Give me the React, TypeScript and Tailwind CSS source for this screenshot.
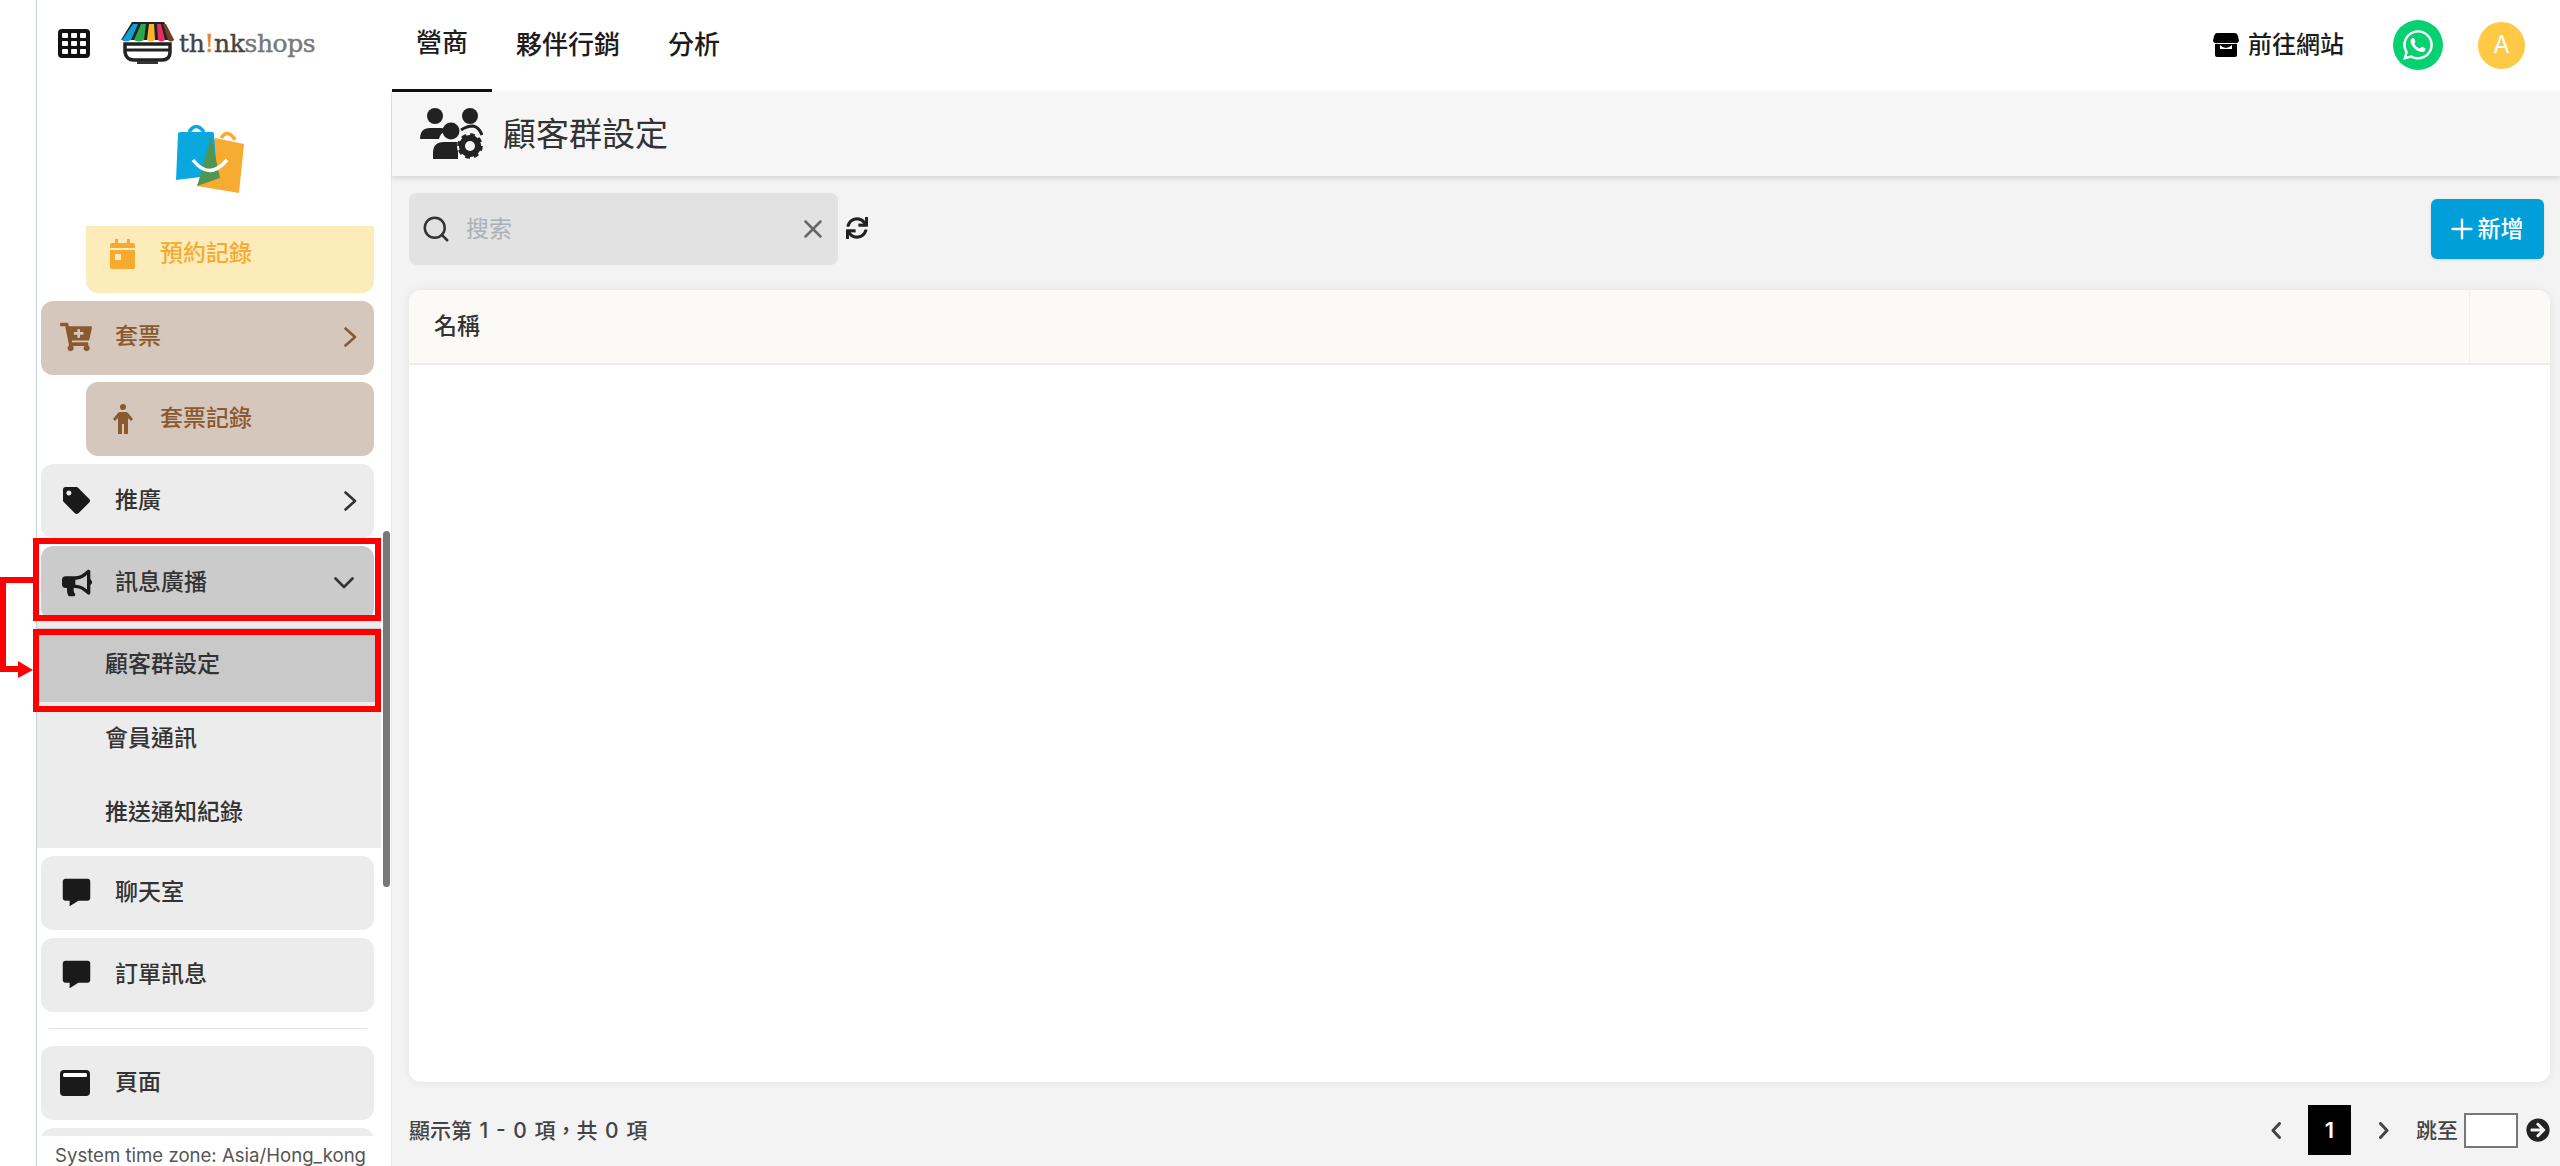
import React from "react";
import { Search, X, Plus } from "lucide-react";
import { FaCartPlus, FaTag, FaBullhorn, FaSync, FaWhatsapp, FaArrowCircleRight } from "react-icons/fa";
import { BiSolidMessage } from "react-icons/bi";

const font = "font-['Inter','Noto_Sans_CJK_TC',sans-serif]";

function GridIcon() {
  return (
    <svg width="32" height="29" viewBox="0 0 32 29">
      <rect x="0" y="0" width="32" height="29" rx="4" fill="#111" />
      {[4, 13, 22].map((x) =>
        [4, 12, 20].map((y) => <rect key={`${x}-${y}`} x={x} y={y} width="6" height="5" rx="1" fill="#fff" />)
      )}
    </svg>
  );
}

function Logo() {
  return (
    <div className="flex items-center gap-[3px]">
      <svg width="56" height="46" viewBox="0 0 56 46">
        <path d="M5 24 L5 32 Q6 40 14 40 L42 40 Q50 40 50 32 L50 24 Z" fill="#fff" stroke="#222" strokeWidth="3.5" />
        <path d="M6 30 L49 30" stroke="#222" strokeWidth="3" />
        <path d="M17 41 h21 v3 h-21 z" fill="#333" />
        <path d="M12 2 L44 2 L54 20 L1 20 Z" fill="#222" />
        <path d="M13 4 L18 4 L11 20 Q5 23 2 20 Z" fill="#109fd8" />
        <path d="M21 4 L26 4 L24 20 Q19 23 14 20 Z" fill="#2aa84a" />
        <path d="M29 4 L34 4 L35 20 Q31 23 27 20 Z" fill="#f9b52c" />
        <path d="M37 4 L41 4 L45 20 Q41 23 38 20 Z" fill="#e52d6b" />
        <path d="M43 4 L46 4 L54 20 Q51 23 48 20 Z" fill="#6f4320" />
      </svg>
      <span className="font-['DejaVu_Serif',serif] text-[25px] leading-none tracking-[-0.4px] text-[#444] [-webkit-text-stroke:0.4px_currentColor]">
        th<span className="text-[#e8862a]">!</span>nk<span className="text-[#777]">shops</span>
      </span>
    </div>
  );
}

function Bags() {
  return (
    <svg width="72" height="72" viewBox="0 0 72 72">
      <path d="M47 15 q7 -10 14 2" stroke="#f8ab31" strokeWidth="3.5" fill="none" />
      <path d="M41 15 L70 21 L65 70 L23 63 Z" fill="#f8ab31" strokeLinejoin="round" />
      <path d="M15 9 q7 -11 15 0" stroke="#0ba8e0" strokeWidth="3.5" fill="none" />
      <path d="M4 11 Q4 9 7 9 L38 9 Q40 9 40 12 L43 52 L2 57 Z" fill="#0ba8e0" />
      <path d="M37 14 L46 55 L23 63 L25 57 Z" fill="#4f9650" />
      <path d="M19 37 Q35 58 53 37" stroke="#fff" strokeWidth="3.5" fill="none" />
    </svg>
  );
}

function CalIcon() {
  return (
    <svg width="25" height="30" viewBox="0 0 25 30">
      <path d="M5 0 h3 v4 h9 v-4 h3 v4 h3 q2 0 2 2 v3 h-25 v-3 q0 -2 2 -2 h3 z" fill="#f8a92f" />
      <path d="M0 11 h25 v17 q0 2 -2 2 h-21 q-2 0 -2 -2 z" fill="#f8a92f" />
      <rect x="5" y="15" width="6" height="6" fill="#fbecb9" />
    </svg>
  );
}

function PersonIcon() {
  return (
    <svg width="20" height="30" viewBox="0 0 20 30" className="ml-[3px]">
      <circle cx="10" cy="3" r="3" fill="currentColor" />
      <path d="M7 8 L13 8 Q14 8 15 9 L20 15 L18 17 L15 14 L15 30 L11 30 L11 20 L9 20 L9 30 L5 30 L5 14 L2 17 L0 15 L5 9 Q6 8 7 8 Z" fill="currentColor" />
    </svg>
  );
}

function WindowIcon() {
  return (
    <svg width="30" height="26" viewBox="0 0 30 26">
      <rect width="30" height="26" rx="4" fill="#1a1a1a" />
      <rect x="3" y="3" width="24" height="4" rx="1.5" fill="#fff" />
    </svg>
  );
}

function StoreIcon() {
  return (
    <svg width="26" height="24" viewBox="0 0 26 24">
      <path d="M4 0 h18 q2 0 3 3 l1 5 q-1 3 -5 2 h-16 q-4 1 -5 -2 l1 -5 q1 -3 3 -3z" fill="#000" />
      <path d="M2 11 h22 v11 q0 2 -2 2 h-18 q-2 0 -2 -2z" fill="#000" />
      <path d="M7 12 q6 6 12 0 v4 h-12z" fill="#fff" />
    </svg>
  );
}

function UsersGear() {
  return (
    <svg width="63" height="52" viewBox="0 0 63 52">
      <circle cx="15" cy="8" r="8" fill="#222" />
      <circle cx="50" cy="8" r="8" fill="#222" />
      <path d="M0 31 Q0 20 10 20 L21 20 Q25 20 24 24 Q20 26 19 31 Z" fill="#222" />
      <path d="M41 22 Q47 18 53 18 Q59 19 62 27" fill="none" stroke="#222" strokeWidth="3" />
      <circle cx="31" cy="23" r="8.5" fill="#222" />
      <path d="M13 51 L13 45 Q13 34 24 34 L38 34 L38 51 Z" fill="#222" />
      <circle cx="50" cy="38" r="13" fill="#f6f6f6" />
      <circle cx="50" cy="38" r="8" fill="none" stroke="#222" strokeWidth="6" />
      <circle cx="50" cy="38" r="11" fill="none" stroke="#222" strokeWidth="3.5" strokeDasharray="4.6 4" />
    </svg>
  );
}

function ChevR({ w = 13, h = 20, sw = 2.6, cls = "" }: { w?: number; h?: number; sw?: number; cls?: string }) {
  return (
    <svg width={w} height={h} viewBox={`0 0 ${w} ${h}`} className={cls}>
      <path d={`M1.5 1.5 L${w - 2} ${h / 2} L1.5 ${h - 1.5}`} fill="none" stroke="currentColor" strokeWidth={sw} strokeLinecap="round" strokeLinejoin="round" />
    </svg>
  );
}

function ChevD() {
  return (
    <svg width="20" height="12" viewBox="0 0 20 12">
      <path d="M1.5 1.5 L10 10 L18.5 1.5" fill="none" stroke="currentColor" strokeWidth="2.6" strokeLinecap="round" strokeLinejoin="round" />
    </svg>
  );
}

function Item({ icon, label, chevron, cls = "bg-[#ececec] text-[#333]" }: { icon: React.ReactNode; label: string; chevron?: "r" | "d"; cls?: string }) {
  return (
    <div className={`ml-1 mr-[17px] flex h-[74px] shrink-0 items-center rounded-xl pb-[1px] pl-[19px] pr-[17px] text-[23px] font-medium leading-none ${cls}`}>
      <span className="flex w-[55px] shrink-0 items-center">{icon}</span>
      <span className="flex-1">{label}</span>
      {chevron === "r" && <ChevR />}
      {chevron === "d" && <span className="mr-[3px] flex"><ChevD /></span>}
    </div>
  );
}

function SubItem({ label, active }: { label: string; active?: boolean }) {
  return (
    <div className={`flex h-[74px] items-center pb-[2px] pl-[68px] text-[23px] font-medium leading-none text-[#333] ${active ? "bg-[#c9c9c9]" : ""}`}>
      {label}
    </div>
  );
}

export default function App() {
  return (
    <div className={`relative h-[1166px] w-[2560px] overflow-hidden bg-white pl-9 ${font}`}>
      <div className="flex h-full flex-col border-l border-[#c8d0d8]">
        <header className="flex h-[92px] shrink-0 items-center">
          <div className="flex h-full w-[355px] shrink-0 items-center gap-[30px] pb-[6px] pl-[21px]">
            <GridIcon />
            <Logo />
          </div>
          <nav className="flex h-full items-stretch text-[26px] font-medium leading-none text-[#1c1c1c]">
            <div className="flex items-center border-b-[3px] border-[#111] px-6 pb-[4px]">營商</div>
            <div className="flex items-center px-6 pb-[2px]">夥伴行銷</div>
            <div className="flex items-center px-6 pb-[2px]">分析</div>
          </nav>
          <div className="ml-auto flex items-center pb-[2px] pr-[35px]">
            <StoreIcon />
            <span className="ml-[9px] text-[24px] font-medium leading-none text-[#1c1c1c]">前往網站</span>
            <span className="ml-[49px] flex h-[50px] w-[50px] items-center justify-center rounded-full bg-[#06d170] text-white">
              <FaWhatsapp size={34} />
            </span>
            <span className="ml-[35px] flex h-[47px] w-[47px] items-center justify-center rounded-full bg-[#ffc845] text-[24px] text-white">A</span>
          </div>
        </header>
        <div className="flex min-h-0 flex-1">
          <aside className="relative flex w-[354px] shrink-0 flex-col bg-white">
            <div className="flex h-[134px] shrink-0 items-center justify-center pr-[8px]">
              <Bags />
            </div>
            <div className="flex min-h-0 flex-1 flex-col gap-2 overflow-hidden">
              <div className="ml-[49px] mr-[17px] flex h-[67px] shrink-0 items-center rounded-b-xl bg-[#fbecb9] pb-[12px] pl-6 text-[23px] font-medium leading-none text-[#f8a92f]">
                <span className="flex w-[50px] shrink-0 items-center"><CalIcon /></span>
                預約記錄
              </div>
              <Item cls="bg-[#d6c7bd] text-[#8a5a2e] pb-[3px]" icon={<FaCartPlus size={32} />} label="套票" chevron="r" />
              <div className="ml-[49px] mr-[17px] -mt-px flex h-[74px] shrink-0 items-center rounded-xl bg-[#d6c7bd] pb-[1px] pl-6 text-[23px] font-medium leading-none text-[#8a5a2e]">
                <span className="flex w-[50px] shrink-0 items-center"><PersonIcon /></span>
                套票記錄
              </div>
              <Item icon={<FaTag size={27} color="#1a1a1a" className="ml-[3px]" />} label="推廣" chevron="r" />
              <div className="mr-[10px] flex shrink-0 flex-col">
                <div className="bg-white pb-2 pr-0">
                  <div className="-mr-[10px]">
                    <Item cls="bg-[#cbcbcb] text-[#333]" icon={<FaBullhorn size={30} color="#1a1a1a" className="ml-[2px]" />} label="訊息廣播" chevron="d" />
                  </div>
                </div>
                <div className="-mt-2 h-[228px] overflow-hidden bg-[#ececec] pt-2">
                  <SubItem label="顧客群設定" active />
                  <SubItem label="會員通訊" />
                  <SubItem label="推送通知紀錄" />
                </div>
              </div>
              <div className="flex flex-col gap-2">
                <Item icon={<BiSolidMessage size={33} color="#1a1a1a" />} label="聊天室" />
                <Item icon={<BiSolidMessage size={33} color="#1a1a1a" />} label="訂單訊息" />
              </div>
              <div className="ml-3 mr-6 mt-[8px] mb-[9px] h-px shrink-0 bg-[#e2e2e2]" />
              <Item icon={<WindowIcon />} label="頁面" />
              <div className="ml-1 mr-[17px] h-[30px] shrink-0 rounded-t-xl bg-[#ececec]" />
            </div>
            <div className="flex h-[30px] shrink-0 items-center bg-white pl-[18px] pt-2 text-[18.6px] leading-none text-[#555]">
              System time zone: Asia/Hong_kong
            </div>
            <div className="absolute left-[346px] top-[439px] h-[356px] w-[7px] rounded bg-[#777]" />
          </aside>
          <main className="flex min-w-0 flex-1 flex-col border-l border-[#e8e8e8] bg-[#f3f3f3]">
            <div className="flex h-[84px] shrink-0 items-center gap-[20px] bg-[#f6f6f6] pl-[28px] shadow-[0_2px_6px_rgba(0,0,0,0.14)]">
              <UsersGear />
              <span className="text-[33px] leading-none text-[#333]">顧客群設定</span>
            </div>
            <div className="mt-[17px] flex h-[72px] shrink-0 items-center pl-[17px] pr-[16px]">
              <div className="flex h-[72px] w-[429px] items-center rounded-lg bg-[#e2e2e2] pl-3 pr-[10px]">
                <Search size={30} strokeWidth={2} color="#333" />
                <span className="ml-[15px] flex-1 text-[23px] leading-none text-[#aab0b8]">搜索</span>
                <X size={30} strokeWidth={2} color="#666" />
              </div>
              <FaSync size={22} color="#222" className="ml-[8px] mb-[3px]" />
              <button className="ml-auto flex h-[60px] w-[113px] items-center justify-center gap-[6px] rounded-md bg-[#009fd9] text-[23px] font-medium leading-none text-white shadow-sm">
                <Plus size={32} strokeWidth={1.8} className="-mx-[6px]" />
                新增
              </button>
            </div>
            <div className="ml-[17px] mr-[10px] mt-[25px] flex h-[792px] shrink-0 flex-col overflow-hidden rounded-xl bg-white shadow-[0_0_10px_rgba(0,0,0,0.07)]">
              <div className="flex h-[75px] shrink-0 border-b-2 border-[#ececec] bg-[#fbfaf6]">
                <div className="flex flex-1 items-center pl-[25px] text-[23px] font-medium leading-none text-[#333]">名稱</div>
                <div className="w-[81px] border-l border-[#eeeeee]" />
              </div>
            </div>
            <div className="flex flex-1 items-center pl-[17px] pr-[10px] pt-[12px]">
              <span className="text-[21px] font-medium leading-none text-[#444] [word-spacing:2px]">顯示第 1 - 0 項，共 0 項</span>
              <div className="ml-auto flex items-center text-[#444]">
                <ChevR w={10} h={17} sw={3} cls="rotate-180" />
                <span className="ml-[27px] flex h-[50px] w-[43px] items-center justify-center bg-black text-[22px] font-semibold text-white">1</span>
                <ChevR w={10} h={17} sw={3} cls="ml-[28px]" />
                <span className="ml-[27px] text-[21px] font-medium leading-none">跳至</span>
                <span className="ml-[6px] h-[35px] w-[54px] border-2 border-[#777] bg-white" />
                <FaArrowCircleRight size={24} color="#222" className="ml-2" />
              </div>
            </div>
          </main>
        </div>
      </div>
      <div className="absolute left-[33px] top-[538px] h-[83px] w-[348px] border-[6px] border-[#ff0000]" />
      <div className="absolute left-[33px] top-[629px] h-[83px] w-[348px] border-[6px] border-[#ff0000]" />
      <svg className="absolute left-0 top-[570px]" width="34" height="112" viewBox="0 0 34 112">
        <path d="M33 10 H3 V99 H18" fill="none" stroke="#ff0000" strokeWidth="6" />
        <path d="M18 91 L33 100 L18 108 Z" fill="#ff0000" />
      </svg>
    </div>
  );
}
